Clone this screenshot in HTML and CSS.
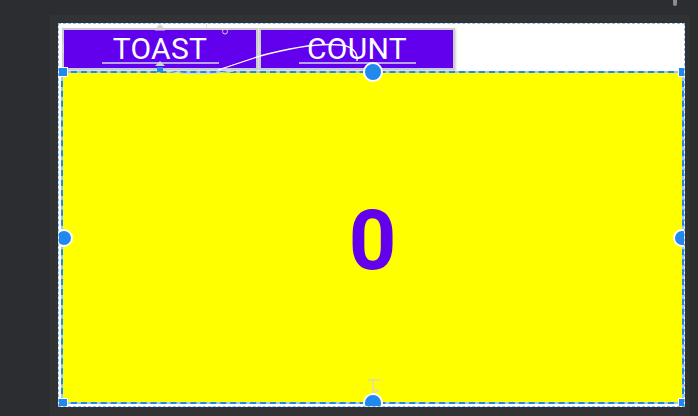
FILE: index.html
```html
<!DOCTYPE html>
<html>
<head>
<meta charset="utf-8">
<link rel="stylesheet" href="styles.css">
</head>
<body>
<div class="scroll-thumb"></div>
<div class="panel">
  <div class="screen">
    <div class="toolbar">
      <button class="btn">TOAST</button>
      <button class="btn">COUNT</button>
    </div>
    <div class="canvas">
      <span class="count">0</span>
    </div>
    <svg class="overlay" width="627" height="385" viewBox="0 0 627 385">
      <!-- constraint curve -->
      <path d="M160 47 L202 33 C232 25 262 20 282 22 C294 23 300 29 299 38" fill="none" stroke="#ffffff" stroke-width="1.3"/>
      <path d="M108 48 Q140 54 176 48" fill="none" stroke="#c9d8ee" stroke-width="1"/>
      <!-- toast anchors -->
      <polygon points="97,6 102,1 107,6" fill="#d4d4d4"/>
      <rect x="97" y="6" width="10" height="1.5" fill="#d4d4d4"/>
      <polygon points="97,43 102,38 107,43" fill="#d4d4d4"/>
      <rect x="99" y="44" width="6" height="5" fill="#2188ee"/>
      <circle cx="167" cy="8.5" r="2.5" fill="none" stroke="#d0d0d0" stroke-width="1"/>
      <rect x="148" y="0" width="1" height="5" fill="#e2e2e2"/>
      <rect x="4" y="20" width="2" height="10" fill="#d4d4d4"/>
      <rect x="201" y="21" width="2" height="8" fill="#d4d4d4"/>
      <!-- bias indicator -->
      <path d="M310 357 H322 M315 357 V372 M315 365 L320 368 L315 370" fill="none" stroke="#dedcb8" stroke-width="1.3"/>
      <!-- side handles -->
      <circle cx="315" cy="49" r="9" fill="#2188ee" stroke="#fff" stroke-width="2"/>
      <circle cx="6" cy="215" r="8" fill="#2188ee" stroke="#fff" stroke-width="2"/>
      <circle cx="624" cy="215" r="8" fill="#2188ee" stroke="#fff" stroke-width="2"/>
      <circle cx="315" cy="380" r="9" fill="#2188ee" stroke="#fff" stroke-width="2"/>
      <!-- corner handles -->
      <rect x="0.5" y="44.5" width="9" height="9" fill="#2188ee" stroke="#fff" stroke-width="1"/>
      <rect x="0.5" y="375.5" width="9" height="9" fill="#2188ee" stroke="#fff" stroke-width="1"/>
      <rect x="620.5" y="44.5" width="9" height="9" fill="#2188ee" stroke="#fff" stroke-width="1"/>
      <rect x="620.5" y="375.5" width="9" height="9" fill="#2188ee" stroke="#fff" stroke-width="1"/>
    </svg>
  </div>
</div>
</body>
</html>
```

FILE: styles.css
```css
html, body {
  margin: 0;
  padding: 0;
}

body {
  width: 698px;
  height: 416px;
  overflow: hidden;
  position: relative;
  background: #2b2d30;
  font-family: Roboto, "Noto Sans", sans-serif;
}

.scroll-thumb {
  position: absolute;
  left: 673px;
  top: 0;
  width: 4px;
  height: 6px;
  background: #8c8c8c;
  border-radius: 0 0 2px 2px;
}

.panel {
  margin: 15px 8px 0 50px;
  height: 401px;
  padding: 8px 0 0 8px;
  box-sizing: border-box;
  background: #303234;
}

.screen {
  position: relative;
  width: 627px;
  height: 384px;
  box-sizing: border-box;
  border: 1px dashed #8dbbeb;
  background: #ffffff;
  padding: 0 0 2px 2px;
  display: flex;
  flex-direction: column;
  overflow: hidden;
}

.toolbar {
  height: 47px;
  flex: none;
  box-sizing: border-box;
  padding: 4px 0 0 1px;
  display: flex;
  gap: 1px;
}

.btn {
  position: relative;
  width: 196px;
  height: 42px;
  box-sizing: border-box;
  margin: 0;
  padding: 0;
  border: 2px solid #cdcdcd;
  background: #6200ee;
  color: #ffffff;
  font-family: Roboto, "Noto Sans", sans-serif;
  font-weight: 400;
  font-size: 30px;
  line-height: 38px;
  letter-spacing: 0.3px;
  box-shadow: 1px 1px 2px rgba(0, 0, 0, 0.18);
}

.btn::after {
  content: "";
  position: absolute;
  left: 50%;
  top: 32px;
  width: 117px;
  margin-left: -58px;
  height: 2px;
  background: #b8a3f3;
}

.canvas {
  flex: 1;
  position: relative;
  background: linear-gradient(#ffff00, #ffff00) padding-box, linear-gradient(#9fc9f3, #9fc9f3) border-box;
  border: 2px dashed #2188ee;
  display: flex;
  align-items: center;
  justify-content: center;
}

.count {
  font-family: Roboto, "Noto Sans", sans-serif;
  font-weight: 700;
  font-size: 83px;
  line-height: 1;
  color: #6200ee;
  padding-top: 6px;
}

.overlay {
  position: absolute;
  left: -1px;
  top: -1px;
  pointer-events: none;
}
```
